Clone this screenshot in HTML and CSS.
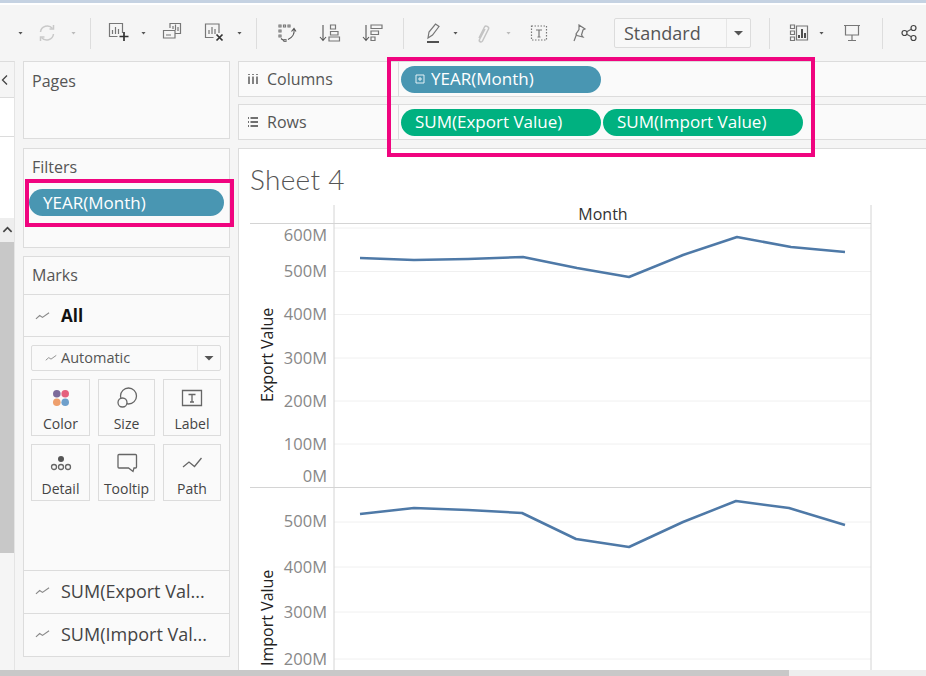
FILE: index.html
```html
<!DOCTYPE html>
<html lang="en">
<head>
  <meta charset="utf-8">
  <meta name="viewport" content="width=device-width, initial-scale=1">
  <title>Sheet 4</title>
  <link rel="stylesheet" href="styles.css">
</head>
<body>

  <div class="app-band"></div>

  <header class="toolbar">
    <span class="caret"></span>
    <svg class="tool refresh" viewBox="0 0 24 24"><path d="M5.500 11a6.800 6.800 0 0 1 12-3.500M18.500 13a6.800 6.800 0 0 1-12 3.500"/><path d="M18.500 4v4h-4M5.500 20v-4h4"/></svg>
    <span class="caret off"></span>
    <i class="sep"></i>

    <svg class="tool" viewBox="0 0 24 24"><path d="M17.500 12V2.500h-13v13h8"/><path d="M7.500 13V9M10.500 13V6M13.500 13V8"/><path class="dark" d="M19 11v9M14.500 15.500h9"/></svg>
    <span class="caret"></span>
    <svg class="tool tool-dup" viewBox="0 0 24 24"><path d="M10 7V2.500h10.500v10H15"/><path d="M3.500 9.500H15V17H3.500z"/><path d="M13 8V5M15.500 9V3.500M18 10V6M6 14h5"/></svg>
    <svg class="tool tool-clear" viewBox="0 0 24 24"><path d="M18 12V3H4.500v13.500h8"/><path d="M8 13V9M11 13V6M14 13V8"/><path class="dark" d="M15.500 13.500l6 6M21.500 13.500l-6 6"/></svg>
    <span class="caret"></span>
    <i class="sep"></i>

    <div class="tool-group">
      <svg class="tool" viewBox="0 0 24 24"><path d="M5 4h2v2H5zM9.500 4h2v2h-2zM14 4h2v2h-2zM5 9h2v2H5zM5 14h2v2H5zM10 18.500h2v2h-2z"/><path class="thin" d="M20 8c.800 5-2 9-6 10.500M17.500 10.500l2.500-3 2 3M7 17.500c1 1 2 1.500 3 2"/></svg>
      <svg class="tool" viewBox="0 0 24 24"><path class="thin" d="M6 4v15M3 16l3 3.500L9 16"/><path d="M13.500 4h5v4h-5zM13.500 10.500h7.500v3.500h-7.500zM12 16h10.500v4H12z"/></svg>
      <svg class="tool" viewBox="0 0 24 24"><path class="thin" d="M6 4v15M3 16l3 3.500L9 16"/><path d="M11 4h11v3.500H11zM11 10h7.500v3.500H11zM11 16h4v3.500h-4z"/></svg>
    </div>
    <i class="sep sep-next"></i>

    <div class="tool-group tight">
      <svg class="tool" viewBox="0 0 24 24"><path d="M7 17l1-6 6.500-8 3.500 2.500-6.500 8.500z"/><path class="dark" d="M6 21h12"/></svg>
      <span class="caret near"></span>
      <svg class="tool faint" viewBox="0 0 24 24"><path d="M9 17l5.500-11c1-2 5-.500 4 2l-6 12c-1 2-4 .500-3-1.500l5.500-10.500"/></svg>
      <span class="caret off"></span>
      <svg class="tool tool-text" viewBox="0 0 24 24"><path class="dots" d="M4.500 5h15v14h-15z"/><path d="M9 9h6M12 9v7M10.500 16h3"/></svg>
      <svg class="tool tool-pin" viewBox="0 0 24 24"><path d="M11 4l6 4-2 1-1.500 5 1.500 2-6-1.500-1-1.500 3-4.500z"/><path d="M8.500 13.500L6 20"/></svg>
    </div>

    <div class="standard">
      <span class="standard-text">Standard</span>
      <span class="standard-btn"><span class="caret big"></span></span>
    </div>
    <i class="sep sep-wide"></i>

    <svg class="tool" viewBox="0 0 24 24"><path d="M3.500 4h4v3.500h-4zM3.500 10h4v3.500h-4zM3.500 16h4v3.500h-4zM9.500 5h11v14h-11z"/><path class="dark" d="M12 17v-3M15 17V8M18 17v-5"/></svg>
    <span class="caret caret-show"></span>
    <svg class="tool tool-present" viewBox="0 0 24 24"><path d="M4 4.500h16M5.500 5v9h13V5M12 14v5M8 19.500h8"/></svg>
    <i class="sep sep-wide"></i>
    <svg class="tool tool-share" viewBox="0 0 24 24"><circle cx="16.500" cy="7" r="2.500"/><circle cx="16.500" cy="17" r="2.500"/><circle cx="7.500" cy="12" r="2.500"/><path class="thin" d="M9.700 10.800l4.600-2.600M9.700 13.200l4.600 2.600"/></svg>
  </header>

  <div class="workspace">

    <aside class="side-strip">
      <div class="strip-head">
        <svg class="strip-icon" viewBox="0 0 8 12"><path d="M6 1.500L1.500 6 6 10.500"/></svg>
      </div>
      <div class="strip-white"></div>
      <div class="strip-scroll">
        <div class="strip-up">
          <svg class="strip-icon up" viewBox="0 0 12 8"><path d="M1.500 6L6 1.500 10.500 6"/></svg>
        </div>
        <div class="strip-thumb"></div>
      </div>
    </aside>

    <section class="cards">
      <div class="card pages">
        <h2 class="card-title">Pages</h2>
      </div>

      <div class="card filters">
        <h2 class="card-title">Filters</h2>
        <div class="pill pill-blue filter-pill">YEAR(Month)</div>
      </div>

      <div class="card marks">
        <h2 class="card-title marks-title">Marks</h2>

        <div class="marks-row marks-all">
          <svg class="mark-line" viewBox="0 0 16 10"><path d="M1 8l4-3.500 3 2L15 1.500"/></svg>
          <b>All</b>
        </div>

        <div class="marks-body">
          <div class="auto-select">
            <svg class="mark-line small" viewBox="0 0 16 10"><path d="M1 8l4-3.500 3 2L15 1.500"/></svg>
            <span class="auto-text">Automatic</span>
            <span class="auto-btn"><span class="caret big"></span></span>
          </div>

          <div class="mark-grid">
            <div class="mark-cell">
              <svg class="mark-icon" viewBox="0 0 24 24">
                <circle class="dot-a" cx="7.800" cy="7.800" r="3.800"/><circle class="dot-b" cx="16.200" cy="7.800" r="3.800"/>
                <circle class="dot-c" cx="7.800" cy="16.200" r="3.800"/><circle class="dot-d" cx="16.200" cy="16.200" r="3.800"/>
              </svg>
              Color
            </div>
            <div class="mark-cell">
              <svg class="mark-icon" viewBox="0 0 24 24"><circle cx="13.500" cy="10" r="8"/><circle class="dot-over" cx="7.500" cy="16.500" r="4.500"/></svg>
              Size
            </div>
            <div class="mark-cell">
              <svg class="mark-icon" viewBox="0 0 24 24"><path d="M2.500 4.500h19v15h-19z"/><path d="M8.500 8.500h7M12 8.500v7.500M10 16h4"/></svg>
              Label
            </div>
            <div class="mark-cell">
              <svg class="mark-icon" viewBox="0 0 24 24"><circle class="dot-dark" cx="12" cy="8" r="3"/><circle cx="5" cy="16" r="2.500"/><circle cx="12" cy="16" r="2.500"/><circle cx="19" cy="16" r="2.500"/></svg>
              Detail
            </div>
            <div class="mark-cell">
              <svg class="mark-icon" viewBox="0 0 24 24"><path d="M4 3.500h16.500a1 1 0 0 1 1 1V16a1 1 0 0 1-1 1H19l-1 3.500-4.500-3.500H4a1 1 0 0 1-1-1V4.500a1 1 0 0 1 1-1z"/></svg>
              Tooltip
            </div>
            <div class="mark-cell">
              <svg class="mark-icon" viewBox="0 0 24 24"><path d="M3 16l6-5 5.500 4.500L21.500 7"/></svg>
              Path
            </div>
          </div>
        </div>

        <div class="marks-row marks-measure">
          <svg class="mark-line" viewBox="0 0 16 10"><path d="M1 8l4-3.500 3 2L15 1.500"/></svg>
          <span>SUM(Export Val...</span>
        </div>
        <div class="marks-row marks-measure">
          <svg class="mark-line" viewBox="0 0 16 10"><path d="M1 8l4-3.500 3 2L15 1.500"/></svg>
          <span>SUM(Import Val...</span>
        </div>
      </div>
    </section>

    <section class="view">
      <div class="shelf shelf-columns">
        <div class="shelf-label">
          <svg class="shelf-icon" viewBox="0 0 12 12"><path d="M2 3.500V11M6 3.500V11M10 3.500V11"/><path d="M2 1v1M6 1v1M10 1v1"/></svg>
          Columns
        </div>
        <div class="shelf-pills">
          <div class="pill pill-blue">
            <svg class="pill-plus" viewBox="0 0 10 10"><path d="M1 1h8v8H1zM5 3v4M3 5h4"/></svg>
            YEAR(Month)
          </div>
        </div>
      </div>

      <div class="shelf shelf-rows">
        <div class="shelf-label">
          <svg class="shelf-icon" viewBox="0 0 12 12"><path d="M3.500 2H11M3.500 6H11M3.500 10H11"/><path d="M1 2h1M1 6h1M1 10h1"/></svg>
          Rows
        </div>
        <div class="shelf-pills">
          <div class="pill pill-green">SUM(Export Value)</div>
          <div class="pill pill-green">SUM(Import Value)</div>
        </div>
      </div>

      <div class="sheet">
        <h1 class="sheet-title">Sheet 4</h1>

        <svg class="chart" viewBox="238 148 688 522">
          <g class="grid">
            <path d="M334 228H871M334 271.500H871M334 314.500H871M334 358H871M334 401H871M334 444H871"/>
            <path d="M334 522H871M334 567H871M334 612H871M334 659H871"/>
          </g>
          <g class="frame">
            <path d="M334 205V670M871 205V670M250 223.500H871M250 487.500H871"/>
          </g>

          <text class="chart-head" x="603" y="220">Month</text>

          <g class="tick">
            <text x="327" y="241">600M</text>
            <text x="327" y="277">500M</text>
            <text x="327" y="320">400M</text>
            <text x="327" y="364">300M</text>
            <text x="327" y="407">200M</text>
            <text x="327" y="450">100M</text>
            <text x="327" y="482">0M</text>
            <text x="327" y="527">500M</text>
            <text x="327" y="573">400M</text>
            <text x="327" y="618">300M</text>
            <text x="327" y="665">200M</text>
          </g>

          <text class="axis-title" transform="translate(273 402) rotate(-90)">Export Value</text>
          <text class="axis-title" transform="translate(273 666) rotate(-90)">Import Value</text>

          <polyline class="series" points="360,258 414,260 468,259 523,257 577,268 629,277 683,255 737,237 791,247 845,252"/>
          <polyline class="series" points="360,514 414,508 468,510 522,513 576,539 629,547 683,522 736,501 789,508 845,525"/>
        </svg>
      </div>
    </section>
  </div>

  <div class="bottom-scroll">
    <div class="bottom-thumb"></div>
  </div>

  <!-- the two pink callouts drawn on top of the screenshot -->
  <div class="callout callout-shelves"></div>
  <div class="callout callout-filter"></div>

</body>
</html>
```

FILE: styles.css
```css
* {
  margin: 0;
  padding: 0;
  box-sizing: border-box;
}

:root {
  --bg: #f5f5f5;
  --card: #fafafa;
  --line: #dcdcdc;
  --text: #555;
  --blue: #4996b2;
  --green: #00b180;
  --pink: #f0047f;
}

html {
  font-family: "Open Sans", "Noto Sans", sans-serif;
  font-size: 16px;
}

body {
  position: relative;
  width: 926px;
  height: 676px;
  overflow: hidden;
  background: var(--bg);
  color: var(--text);
}

.app-band {
  height: 5px;
  background: #fff;
  border-top: 3px solid #c5d2e2;
}

/* toolbar */

.toolbar {
  display: flex;
  align-items: center;
  height: 56px;
  padding-left: 18px;
}

.tool {
  flex: none;
  width: 24px;
  height: 24px;
  fill: none;
  stroke: #777;
  stroke-width: 1.2;
}
.tool .dark {
  stroke: #333;
  stroke-width: 1.7;
}
.tool .thin {
  stroke: #555;
  stroke-width: 1.1;
}
.tool .dots {
  stroke-dasharray: 1.5 1.5;
}
.tool.faint {
  stroke: #c4c4c4;
  stroke-width: 1.5;
}
.refresh {
  margin-left: 12px;
  stroke: #c9c9c9;
  stroke-width: 1.5;
}
.tool-dup {
  margin-left: 14px;
}
.tool-clear {
  margin-left: 17px;
}
.tool-text {
  margin-left: 4px;
}
.tool-pin {
  margin-left: 5px;
}
.tool-present {
  margin-left: 16px;
}
.tool-share {
  margin-left: -3px;
  stroke: #444;
}

.caret {
  flex: none;
  display: block;
  width: 5px;
  height: 3px;
  margin-left: 12px;
  background: #555;
  clip-path: polygon(0 0, 100% 0, 50% 100%);
}
.toolbar > .caret:first-child,
.tool-group .caret {
  margin-left: 0;
}
.caret.off {
  background: #bbb;
}
.tool-group .caret.near {
  margin-left: -4px;
}
.caret-show {
  margin-left: 8px;
}
.caret.big {
  width: 10px;
  height: 5px;
  margin: 0;
}

.sep {
  flex: none;
  display: block;
  width: 1px;
  height: 31px;
  margin: 0 14px;
  background: #ddd;
}
.sep-next {
  margin-left: 19px;
}
.sep-wide {
  margin-left: 18px;
  margin-right: 17px;
}

.tool-group {
  display: flex;
  align-items: center;
  gap: 19px;
  margin-left: 3px;
}
.tool-group.tight {
  gap: 12px;
}

.standard {
  flex: none;
  display: flex;
  align-items: stretch;
  width: 137px;
  height: 30px;
  margin-left: 22px;
  background: #f8f8f8;
  border: 1px solid var(--line);
  border-radius: 2px;
}
.standard-text {
  flex: 1;
  padding-left: 9px;
  font-size: 18px;
  line-height: 28px;
}
.standard-btn {
  display: flex;
  align-items: center;
  justify-content: center;
  width: 24px;
  border-left: 1px solid #e6e6e6;
}

/* three columns under the toolbar */

.workspace {
  display: flex;
  height: 609px;
}

.side-strip {
  display: flex;
  flex-direction: column;
  width: 15px;
  border-right: 1px solid #e4e4e4;
  border-top: 1px solid var(--line);
}
.strip-head {
  display: flex;
  align-items: center;
  justify-content: center;
  height: 36px;
  padding-right: 4px;
  border-bottom: 1px solid var(--line);
}
.strip-icon {
  width: 8px;
  height: 12px;
  fill: none;
  stroke: #444;
  stroke-width: 1.3;
}
.strip-icon.up {
  width: 11px;
  height: 8px;
  stroke-width: 1.8;
}
.strip-white {
  height: 38px;
  background: #fff;
}
.strip-scroll {
  flex: 1;
  padding-top: 81px;
  background: linear-gradient(#fff 81px, transparent 81px);
  border-top: 1px solid var(--line);
}
.strip-up {
  display: flex;
  align-items: center;
  justify-content: center;
  height: 24px;
  background: #eee;
}
.strip-thumb {
  height: 311px;
  background: #c8c8c8;
}

.cards {
  display: flex;
  flex-direction: column;
  gap: 9px;
  width: 207px;
  margin-left: 8px;
  margin-bottom: 13px;
}

.card {
  background: var(--card);
  border: 1px solid var(--line);
}
.card-title {
  padding: 7px 0 0 8px;
  font-size: 16px;
  font-weight: 400;
  line-height: 22px;
}
.pages {
  height: 78px;
}
.pages .card-title {
  padding-top: 8px;
}
.filters {
  height: 100px;
}
.marks {
  display: flex;
  flex-direction: column;
  flex: 1;
  margin-top: -1px;
}
.marks-title {
  height: 38px;
  border-bottom: 1px solid var(--line);
}

.marks-row {
  display: flex;
  align-items: center;
  gap: 11px;
  padding-left: 11px;
  height: 43px;
}
.marks-all {
  height: 42px;
  border-bottom: 1px solid var(--line);
  color: #111;
  font-size: 17px;
}
.marks-measure {
  padding-bottom: 2px;
  border-top: 1px solid var(--line);
  color: #444;
  font-size: 18px;
}

.mark-line {
  flex: none;
  width: 15px;
  height: 10px;
  fill: none;
  stroke: #888;
  stroke-width: 1.2;
}
.mark-line.small {
  width: 12px;
  height: 8px;
}

.marks-body {
  flex: 1;
  padding: 8px 8px 0 7px;
}

.auto-select {
  display: flex;
  align-items: center;
  height: 26px;
  padding-left: 13px;
  background: var(--card);
  border: 1px solid var(--line);
  border-radius: 2px;
  font-size: 14.5px;
  line-height: 22px;
}
.auto-text {
  flex: 1;
  padding-left: 4px;
  padding-bottom: 1px;
}
.auto-btn {
  display: flex;
  align-items: center;
  justify-content: center;
  align-self: stretch;
  width: 23px;
  border-left: 1px solid #e6e6e6;
}

.mark-grid {
  display: grid;
  grid-template-columns: 59px 57px 58px;
  grid-auto-rows: 57px;
  gap: 8px;
  margin-top: 8px;
}
.mark-cell {
  display: flex;
  flex-direction: column;
  align-items: center;
  justify-content: flex-end;
  gap: 4px;
  padding-bottom: 2px;
  border: 1px solid var(--line);
  font-size: 14px;
  line-height: 19px;
  color: #444;
}
.mark-icon {
  width: 24px;
  height: 24px;
  fill: none;
  stroke: #666;
  stroke-width: 1.3;
}
.mark-icon .dot-a { fill: #7c6a9a; stroke: none; }
.mark-icon .dot-b { fill: #e5617e; stroke: none; }
.mark-icon .dot-c { fill: #ee9f6d; stroke: none; }
.mark-icon .dot-d { fill: #6e9fcb; stroke: none; }
.mark-icon .dot-over { fill: var(--card); }
.mark-icon .dot-dark { fill: #555; stroke: none; }

/* shelves and the sheet */

.view {
  display: flex;
  flex-direction: column;
  flex: 1;
  margin-left: 8px;
}

.shelf {
  display: flex;
  flex: none;
  height: 36px;
  background: var(--card);
  border-top: 1px solid var(--line);
  border-bottom: 1px solid var(--line);
  border-left: 1px solid var(--line);
}
.shelf-rows {
  margin-top: 7px;
}
.shelf-label {
  display: flex;
  align-items: center;
  gap: 8px;
  width: 160px;
  padding-left: 8px;
  border-right: 1px solid var(--line);
  font-size: 16px;
}
.shelf-icon {
  width: 12px;
  height: 12px;
  fill: none;
  stroke: #444;
  stroke-width: 1.3;
}
.shelf-pills {
  display: flex;
  align-items: center;
  gap: 2px;
  padding-left: 2px;
}

.pill {
  display: flex;
  align-items: center;
  gap: 6px;
  width: 200px;
  height: 27px;
  padding: 0 0 2px 14px;
  border-radius: 14px;
  color: #fff;
  font-size: 17px;
}
.pill-blue {
  background: var(--blue);
}
.pill-green {
  background: var(--green);
}
.pill-plus {
  width: 10px;
  height: 10px;
  margin-top: 2px;
  fill: none;
  stroke: #e4f0f5;
  stroke-width: 1;
}
.filter-pill {
  width: 195px;
  margin: 11px 0 0 5px;
  padding-bottom: 0;
}

.sheet {
  position: relative;
  flex: 1;
  min-height: 0;
  margin-top: 8px;
  background: #fff;
  border-top: 1px solid var(--line);
  border-left: 1px solid var(--line);
}
.sheet-title {
  position: absolute;
  left: 11px;
  top: 13px;
  font-family: "Lato", sans-serif;
  font-size: 28px;
  font-weight: 300;
  line-height: 34px;
  color: #555;
  letter-spacing: 0.3px;
}
.chart {
  display: block;
  width: 688px;
  height: 522px;
  margin: -1px 0 0 -1px;
}
.grid path {
  fill: none;
  stroke: #f0f0f0;
}
.frame path {
  fill: none;
  stroke: #d4d4d4;
}
.series {
  fill: none;
  stroke: #4e79a7;
  stroke-width: 2.5;
  stroke-linejoin: round;
}
.chart-head {
  font-size: 16px;
  fill: #333;
  text-anchor: middle;
}
.tick text {
  font-size: 16.5px;
  fill: #888;
  text-anchor: end;
}
.axis-title {
  font-size: 16px;
  fill: #222;
}

.bottom-scroll {
  height: 6px;
  background: #eee;
}
.bottom-thumb {
  width: 789px;
  height: 100%;
  background: #c8c8c8;
}

/* callouts */

.callout {
  position: absolute;
  border: 4px solid var(--pink);
}
.callout-shelves {
  left: 387px;
  top: 57px;
  width: 428px;
  height: 100px;
}
.callout-filter {
  left: 25px;
  top: 179px;
  width: 209px;
  height: 48px;
}
```
